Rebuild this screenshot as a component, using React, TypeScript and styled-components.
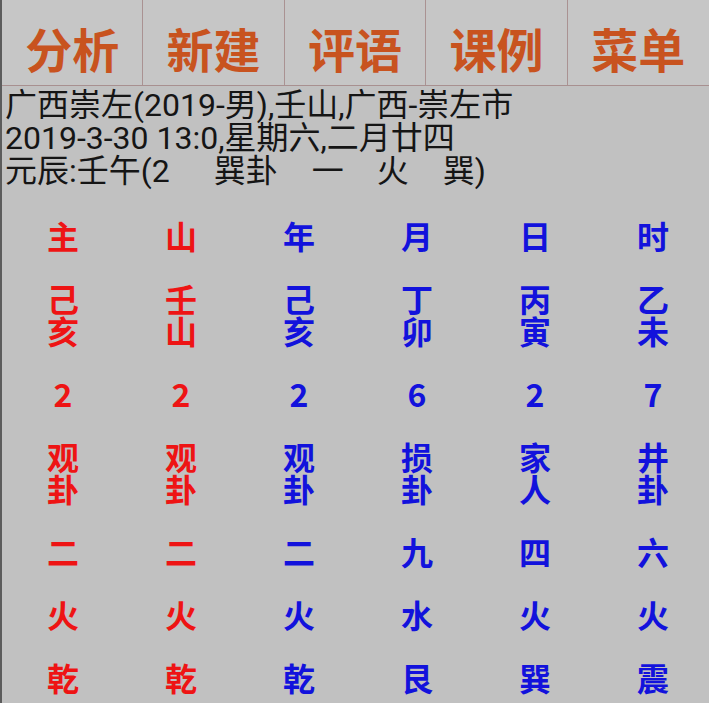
import React from "react";
import styled, { createGlobalStyle } from "styled-components";

const Global = createGlobalStyle`
  html, body { margin: 0; padding: 0; background: #c1c1c1; }
  body { font-family: Roboto, "Noto Sans CJK SC", sans-serif; }
`;

const Page = styled.div`
  width: 709px;
  height: 703px;
  box-sizing: border-box;
  border-left: 2px solid #5c5c5c;
  background: #c1c1c1;
  overflow: hidden;
  display: flex;
  flex-direction: column;
`;

const Toolbar = styled.div`
  display: grid;
  grid-template-columns: repeat(5, 1fr);
  height: 86px;
  box-sizing: border-box;
  border-bottom: 1px solid #a89090;
  background: #c6c6c6;
`;

const ToolButton = styled.div<{ $last?: boolean }>`
  display: flex;
  align-items: center;
  justify-content: center;
  padding-top: 10px;
  box-sizing: border-box;
  border-right: ${(p) => (p.$last ? "none" : "1px solid #aa9292")};
  color: #c8531f;
  font-family: "Noto Sans CJK SC", sans-serif;
  font-weight: 700;
  font-size: 47px;
  line-height: 1;
`;

const Info = styled.div`
  padding: 3px 0 0 3px;
  color: #151515;
  font-size: 32px;
  line-height: 33px;
`;

const InfoLine = styled.div`
  white-space: nowrap;
  display: flex;
  align-items: baseline;
`;

const Seg = styled.span<{ $gap?: number }>`
  margin-left: ${(p) => p.$gap ?? 0}px;
`;

const Board = styled.div`
  display: grid;
  grid-template-columns: repeat(6, 118px);
  row-gap: 31px;
  padding: 31px 0 0 2px;
`;

const Cell = styled.div<{ $red?: boolean }>`
  display: flex;
  flex-direction: column;
  align-items: center;
  color: ${(p) => (p.$red ? "#ee1414" : "#1212dc")};
  font-family: "Noto Sans CJK SC", sans-serif;
  font-weight: 700;
  font-size: 32px;
  line-height: 32px;
`;

const Glyph = styled.div`
  display: block;
  height: 32px;
  line-height: 32px;
`;

const tools = ["分析", "新建", "评语", "课例", "菜单"];

const rows: string[][] = [
  ["主", "山", "年", "月", "日", "时"],
  ["己亥", "壬山", "己亥", "丁卯", "丙寅", "乙未"],
  ["2", "2", "2", "6", "2", "7"],
  ["观卦", "观卦", "观卦", "损卦", "家人", "井卦"],
  ["二", "二", "二", "九", "四", "六"],
  ["火", "火", "火", "水", "火", "火"],
  ["乾", "乾", "乾", "艮", "巽", "震"],
];

export default function App() {
  return (
    <>
      <Global />
      <Page>
        <Toolbar>
          {tools.map((t, i) => (
            <ToolButton key={t} $last={i === tools.length - 1}>
              {t}
            </ToolButton>
          ))}
        </Toolbar>
        <Info>
          <InfoLine>广西崇左(2019-男),壬山,广西-崇左市</InfoLine>
          <InfoLine>2019-3-30 13:0,星期六,二月廿四</InfoLine>
          <InfoLine>
            <Seg>元辰:壬午(2</Seg>
            <Seg $gap={44}>巽卦</Seg>
            <Seg $gap={34}>一</Seg>
            <Seg $gap={33}>火</Seg>
            <Seg $gap={34}>巽)</Seg>
          </InfoLine>
        </Info>
        <Board>
          {rows.map((row, r) =>
            row.map((txt, c) => (
              <Cell key={`${r}-${c}`} $red={c < 2}>
                {/^[0-9]+$/.test(txt)
                  ? <Glyph>{txt}</Glyph>
                  : Array.from(txt).map((ch, k) => <Glyph key={k}>{ch}</Glyph>)}
              </Cell>
            ))
          )}
        </Board>
      </Page>
    </>
  );
}
